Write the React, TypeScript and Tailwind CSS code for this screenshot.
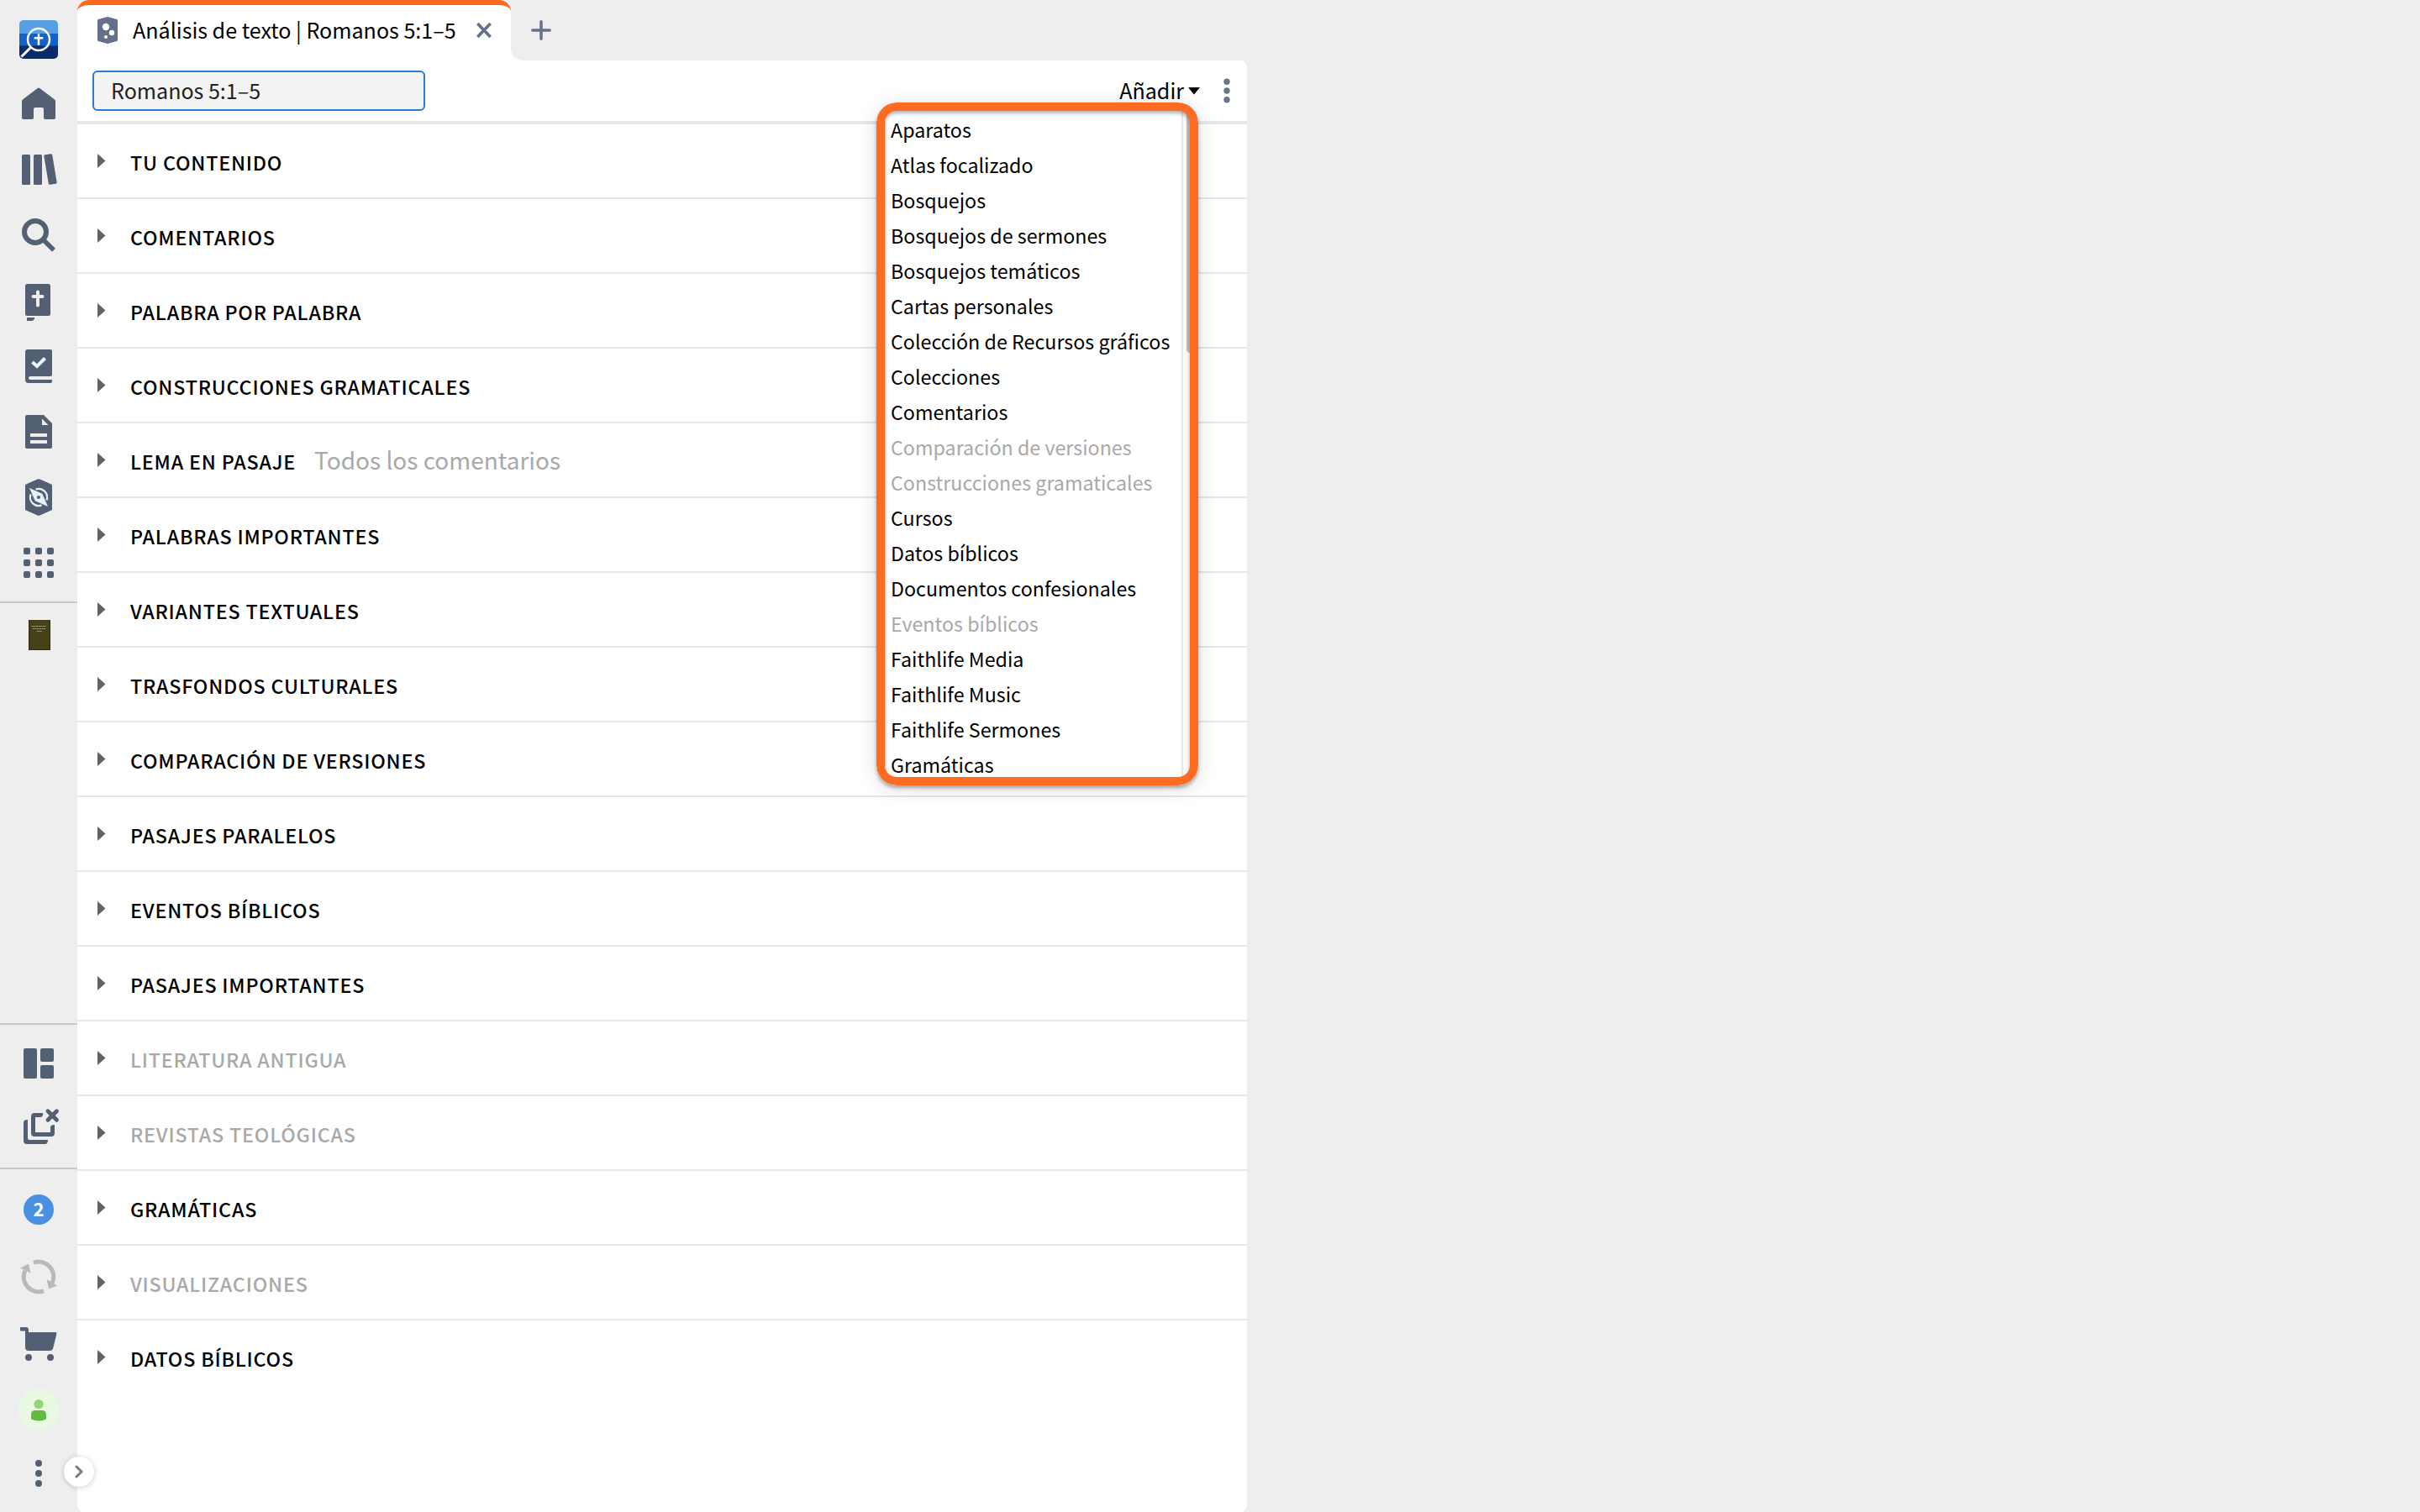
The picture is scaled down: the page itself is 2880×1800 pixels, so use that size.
import type { ReactNode } from "react";

interface Section {
  label: string;
  hint?: string;
  disabled?: boolean;
}

interface MenuEntry {
  label: string;
  disabled?: boolean;
}

const SECTIONS: Section[] = [
  { label: "TU CONTENIDO" },
  { label: "COMENTARIOS" },
  { label: "PALABRA POR PALABRA" },
  { label: "CONSTRUCCIONES GRAMATICALES" },
  { label: "LEMA EN PASAJE", hint: "Todos los comentarios" },
  { label: "PALABRAS IMPORTANTES" },
  { label: "VARIANTES TEXTUALES" },
  { label: "TRASFONDOS CULTURALES" },
  { label: "COMPARACIÓN DE VERSIONES" },
  { label: "PASAJES PARALELOS" },
  { label: "EVENTOS BÍBLICOS" },
  { label: "PASAJES IMPORTANTES" },
  { label: "LITERATURA ANTIGUA", disabled: true },
  { label: "REVISTAS TEOLÓGICAS", disabled: true },
  { label: "GRAMÁTICAS" },
  { label: "VISUALIZACIONES", disabled: true },
  { label: "DATOS BÍBLICOS" },
];

const MENU: MenuEntry[] = [
  { label: "Aparatos" },
  { label: "Atlas focalizado" },
  { label: "Bosquejos" },
  { label: "Bosquejos de sermones" },
  { label: "Bosquejos temáticos" },
  { label: "Cartas personales" },
  { label: "Colección de Recursos gráficos" },
  { label: "Colecciones" },
  { label: "Comentarios" },
  { label: "Comparación de versiones", disabled: true },
  { label: "Construcciones gramaticales", disabled: true },
  { label: "Cursos" },
  { label: "Datos bíblicos" },
  { label: "Documentos confesionales" },
  { label: "Eventos bíblicos", disabled: true },
  { label: "Faithlife Media" },
  { label: "Faithlife Music" },
  { label: "Faithlife Sermones" },
  { label: "Gramáticas" },
];

// Sidebar slot: every glyph is drawn on the rail's own grid, top is where the slot starts.
function Slot({ top, height, children }: { top: number; height: number; children: ReactNode }) {
  return (
    <button type="button" className="block w-[92px] shrink-0 text-[#535f73]">
      <svg width={92} height={height} viewBox={`0 ${top} 92 ${height}`} fill="currentColor" className="block">
        {children}
      </svg>
    </button>
  );
}

function Divider() {
  return <div className="h-0.5 w-full shrink-0 bg-[#c9c9c9]" />;
}

function Sidebar() {
  return (
    <aside className="flex h-full w-[92px] shrink-0 flex-col">
      <Slot top={0} height={85}>
        <clipPath id="logo">
          <rect x="23" y="24" width="46" height="46" rx="5" />
        </clipPath>
        <g clipPath="url(#logo)">
          <rect x="23" y="24" width="46" height="16" fill="#559fe2" />
          <rect x="23" y="40" width="46" height="15" fill="#1461c8" />
          <rect x="23" y="54.5" width="46" height="16" fill="#0a2a6b" />
          <path d="M36.5 56.5 25.5 67.500" stroke="#fff" strokeWidth="3" />
          <circle cx="46" cy="47" r="13" fill="none" stroke="#fff" strokeWidth="2.5" />
          <path d="M46 40.300v13.400M40.700 45.300h10.600" stroke="#fff" strokeWidth="2.5" />
        </g>
      </Slot>
      <Slot top={85} height={78}>
        <path d="M44.800 105q1.200-.9 2.400 0L65 118.500q1 .8 1 2V140q0 2-2 2H54q-2 0-2-2v-10q0-2-2-2h-8q-2 0-2 2v10q0 2-2 2H28q-2 0-2-2v-19.500q0-1.200 1-2z" />
      </Slot>
      <Slot top={163} height={78}>
        <rect x="26" y="184" width="10" height="36" rx="1.5" />
        <rect x="40" y="184" width="10" height="36" rx="1.5" />
        <rect x="55" y="183.5" width="10" height="36" rx="1.5" transform="rotate(-9.5 60 201.5)" />
      </Slot>
      <Slot top={241} height={78}>
        <circle cx="42" cy="276" r="13" fill="none" stroke="currentColor" strokeWidth="6" />
        <path d="m51 285 13 12.700" stroke="currentColor" strokeWidth="5.5" />
      </Slot>
      <Slot top={319} height={78}>
        <rect x="30" y="338" width="30" height="38" rx="2.5" />
        <path d="M45 347.500v16M39.500 353h11" stroke="#eee" strokeWidth="4" strokeLinecap="round" />
        <path d="M32 378h9.300q-.6 4-4.300 4h-5z" />
      </Slot>
      <Slot top={397} height={78}>
        <path d="M33 416h27q2 0 2 2v28q0 2-2 2H36q-2 0-2 2t2 2h26v2q0 2-2 2H34q-4 0-4-4v-33q0-3 3-3z" />
        <path d="m38.500 431 5.500 5 9.500-9.500" fill="none" stroke="#eef3f8" strokeWidth="4" />
      </Slot>
      <Slot top={475} height={78}>
        <path d="M32 494h20l10 10v28q0 2-2 2H32q-2 0-2-2v-36q0-2 2-2z" />
        <path d="M50 498.500v7.500h7.500zM36 516h20v4H36zM36 524h20v4H36z" fill="#eee" />
      </Slot>
      <Slot top={553} height={78}>
        <path d="M44.500 570.600q1.500-.8 3 0L61 576.400q1 .5 1 1.600v28q0 1.100-1 1.600l-13.500 5.800q-1.500.8-3 0L31 607.600q-1-.5-1-1.600v-28q0-1.100 1-1.600z" />
        <g fill="none" stroke="#e9eff6" strokeWidth="2.2">
          <path d="M42.500 582.600a10 10 0 0 1 12.900 12.900" />
          <path d="M49.500 601.400a10 10 0 0 1-12.900-12.900" />
        </g>
        <path d="M35 581 50.300 587.700 57 603l-15.300-6.700z" fill="#e9eff6" />
        <circle cx="46" cy="592" r="2.1" />
      </Slot>
      <Slot top={631} height={85}>
        {[652, 666, 680].map((y) => [28, 42, 56].map((x) => <rect key={`${x}-${y}`} x={x} y={y} width="8" height="8" rx="2" />))}
      </Slot>
      <Divider />
      <Slot top={718} height={78}>
        <rect x="34" y="738" width="26" height="36" fill="#45421a" />
        <path d="M34.500 738v36M34 773.500h26M59.500 738v36" stroke="#302a12" />
        <path d="M38 745.500h17M39 748.500h15M44 751.500h6" stroke="#a5a582" strokeDasharray="2 .6" />
      </Slot>

      <div className="flex-1" />

      <Divider />
      <Slot top={1220} height={86}>
        <rect x="28" y="1248" width="16" height="36" rx="2" />
        <rect x="48" y="1248" width="16" height="16" rx="2" />
        <rect x="48" y="1268" width="16" height="16" rx="2" />
      </Slot>
      <Slot top={1306} height={84}>
        <path d="M28 1336q.3-3 5-3v22q0 2 2 2h22q0 4.700-3 5H32q-4 0-4-4z" />
        <path d="M51.300 1325q0 5-3.300 5h-6v18h18v-6q0-3 5-3v10q0 4-4 4H41q-4 0-4-4v-20q0-4 4-4z" />
        <path d="m57 1322.700 10.500 10.500m0-10.500L57 1333.200" stroke="currentColor" strokeWidth="4.800" strokeLinecap="round" />
      </Slot>
      <Divider />
      <div className="flex h-[92px] shrink-0 items-start justify-center pt-[30px]">
        <span className="flex size-9 justify-center rounded-full bg-[#4a90e2] text-[22px] leading-[33px] font-bold text-white">2</span>
      </div>
      <Slot top={1484} height={74}>
        <g fill="none" stroke="#b9b9b9" strokeWidth="5">
          <path d="M40 1503.200a17.700 17.700 0 0 1 22 24.300" />
          <path d="M52 1536.800a17.700 17.700 0 0 1-22-24.300" />
        </g>
        <path d="m24 1509.500 10-5 2.500 11zM68 1530.500l-10 4-2.500-11.500z" fill="#b9b9b9" />
      </Slot>
      <Slot top={1558} height={84}>
        <path d="M24 1580h7q3 0 3 3v3h32q1.800 0 1.400 2l-4.200 17q-.8 3-3.700 3H34q-4 0-4-4v-19.500h-5q-1 0-1-1z" />
        <circle cx="34" cy="1616" r="4" />
        <circle cx="60" cy="1616" r="4" />
      </Slot>
      <Slot top={1642} height={72}>
        <circle cx="46" cy="1678" r="24.5" fill="#e7f9e0" />
        <circle cx="46" cy="1671.5" r="5.6" fill="#8fd774" />
        <path d="M42 1679h8q5 0 5 5.500v5q-9 4-18 0v-5q0-5.500 5-5.500z" fill="#62b946" />
      </Slot>
      <Slot top={1714} height={86}>
        <circle cx="46" cy="1742" r="4" />
        <circle cx="46" cy="1754" r="4" />
        <circle cx="46" cy="1766" r="4" />
      </Slot>
    </aside>
  );
}

function TabStrip() {
  return (
    <div className="flex h-[72px] shrink-0">
      <div className="flex w-[516px] items-center overflow-hidden rounded-t-[14px] border-t-[6px] border-[#ff6720] bg-white pb-1.5 pl-6">
        <svg width="24" height="32" viewBox="0 0 24 32" className="shrink-0" fill="#65718a">
          <path d="M11 .3q1-.5 2 0l10 2.700q1 .3 1 1.300v23.400q0 1-1 1.300l-10 2.700q-1 .5-2 0L1 29q-1-.3-1-1.300V4.300Q0 3.300 1 3z" />
          <circle cx="10" cy="12" r="4.2" fill="#fff" />
          <circle cx="17" cy="19" r="3.2" fill="#fff" />
          <circle cx="10" cy="24" r="2" fill="#fff" />
        </svg>
        <span className="mb-0.5 ml-[18px] w-[390px] shrink-0 whitespace-nowrap text-[25.07px] leading-[36px]">
          Análisis de texto | Romanos 5:1–5
        </span>
        <svg width="18" height="18" viewBox="0 0 18 18" className="ml-[19px] shrink-0" stroke="#65718a" strokeWidth="3.6">
          <path d="m1.300 1 15.400 16M16.700 1 1.300 17" />
        </svg>
      </div>
      {/* inverse corner where the active tab meets the panel */}
      <svg width="16" height="16" viewBox="0 0 16 16" className="self-end" fill="#fff">
        <path d="M0 0v16h16Q0 16 0 0z" />
      </svg>
      <svg width="24" height="24" viewBox="0 0 24 24" className="mt-6 ml-2" stroke="#65718a" strokeWidth="3.5" strokeLinecap="round">
        <path d="M12 1.800v20.400M1.800 12h20.400" />
      </svg>
    </div>
  );
}

function AddMenu() {
  return (
    <div className="absolute top-[50px] left-[951px] flex h-[813px] w-[383px] overflow-hidden rounded-[24px] bg-white shadow-[0_3px_4px_rgba(0,0,0,0.3),0_4px_26px_rgba(0,0,0,0.13)]">
      <ul className="mt-[11px] ml-[17px] w-[346px] shrink-0">
        {MENU.map((entry) => (
          <li
            key={entry.label}
            className={`h-[42px] text-[23.28px] leading-[42px] whitespace-nowrap ${entry.disabled ? "text-[#a9a9a9]" : "text-black"}`}
          >
            {entry.label}
          </li>
        ))}
      </ul>
      <div className="flex w-2.5 shrink-0 justify-end border-l-2 border-[#e7e7e7] bg-[#fafafa]">
        <div className="h-[298px] w-1 rounded-bl-[4px] bg-[#c1c1c1]" />
      </div>
      <div className="absolute inset-0 rounded-[24px] border-[10px] border-[#ff6b23]" />
      <div className="absolute inset-2.5 rounded-[14px] shadow-[inset_0_3px_4px_rgba(0,0,0,0.3)]" />
    </div>
  );
}

function Toolbar() {
  return (
    <div className="flex h-[76px] shrink-0 items-center border-b-4 border-[#e7e7e7] pr-5 pl-[18px]">
      <div className="h-12 w-[396px] rounded-[6px] border-2 border-[#2a7bd5] bg-[#f3f3f3] pl-5 text-[25.07px] leading-[42px] text-[#222]">
        Romanos 5:1–5
      </div>
      <button type="button" className="ml-auto flex items-center text-[25.07px] leading-[44px]">
        <span className="mb-0.5">Añadir</span>
        <svg width="14" height="9" viewBox="0 0 14 9" className="ml-[5px]">
          <path d="M0 0h14L7 8.500z" />
        </svg>
      </button>
      <svg width="8" height="30" viewBox="0 0 8 30" className="ml-7" fill="#6b7589">
        <circle cx="4" cy="4.3" r="3.7" />
        <circle cx="4" cy="15" r="3.7" />
        <circle cx="4" cy="25.7" r="3.7" />
      </svg>
    </div>
  );
}

export default function App() {
  return (
    <div className="flex h-[1800px] w-[2880px] overflow-hidden bg-[#eee] font-['Noto_Sans_CJK_SC',sans-serif] text-black">
      <Sidebar />
      <main className="relative flex w-[1392px] shrink-0 flex-col">
        <TabStrip />
        <section className="relative flex flex-1 flex-col rounded-tr-[8px] rounded-b-[8px] bg-white">
          <Toolbar />
          <ul>
            {SECTIONS.map((section) => (
              <li key={section.label} className="flex h-[89px] border-b-2 border-[#e7e7e7] pl-6 last:border-b-0">
                <svg width="10" height="17" viewBox="0 0 10 17" className="mt-[35px] shrink-0" fill="#636363">
                  <path d="M0 0v17l9.500-8.500z" />
                </svg>
                <span
                  className={`ml-[29px] text-[23.28px] leading-[90px] font-medium tracking-[0.8px] whitespace-nowrap ${
                    section.disabled ? "text-[#a9a9a9]" : "text-black"
                  }`}
                >
                  {section.label}
                </span>
                {section.hint ? (
                  <span className="ml-[22px] text-[28px] leading-[86px] whitespace-nowrap text-[#a9a9a9]">{section.hint}</span>
                ) : null}
              </li>
            ))}
          </ul>
          <AddMenu />
        </section>
        <button
          type="button"
          className="absolute top-[1734px] -left-4 flex size-9 items-center justify-center rounded-full bg-white shadow-[0_1px_6px_rgba(0,0,0,0.2)]"
        >
          <svg width="10" height="16" viewBox="0 0 10 16" fill="none" stroke="#7b7b7b" strokeWidth="3" strokeLinecap="round" className="block">
            <path d="m2 2 6 6-6 6" />
          </svg>
        </button>
      </main>
    </div>
  );
}
